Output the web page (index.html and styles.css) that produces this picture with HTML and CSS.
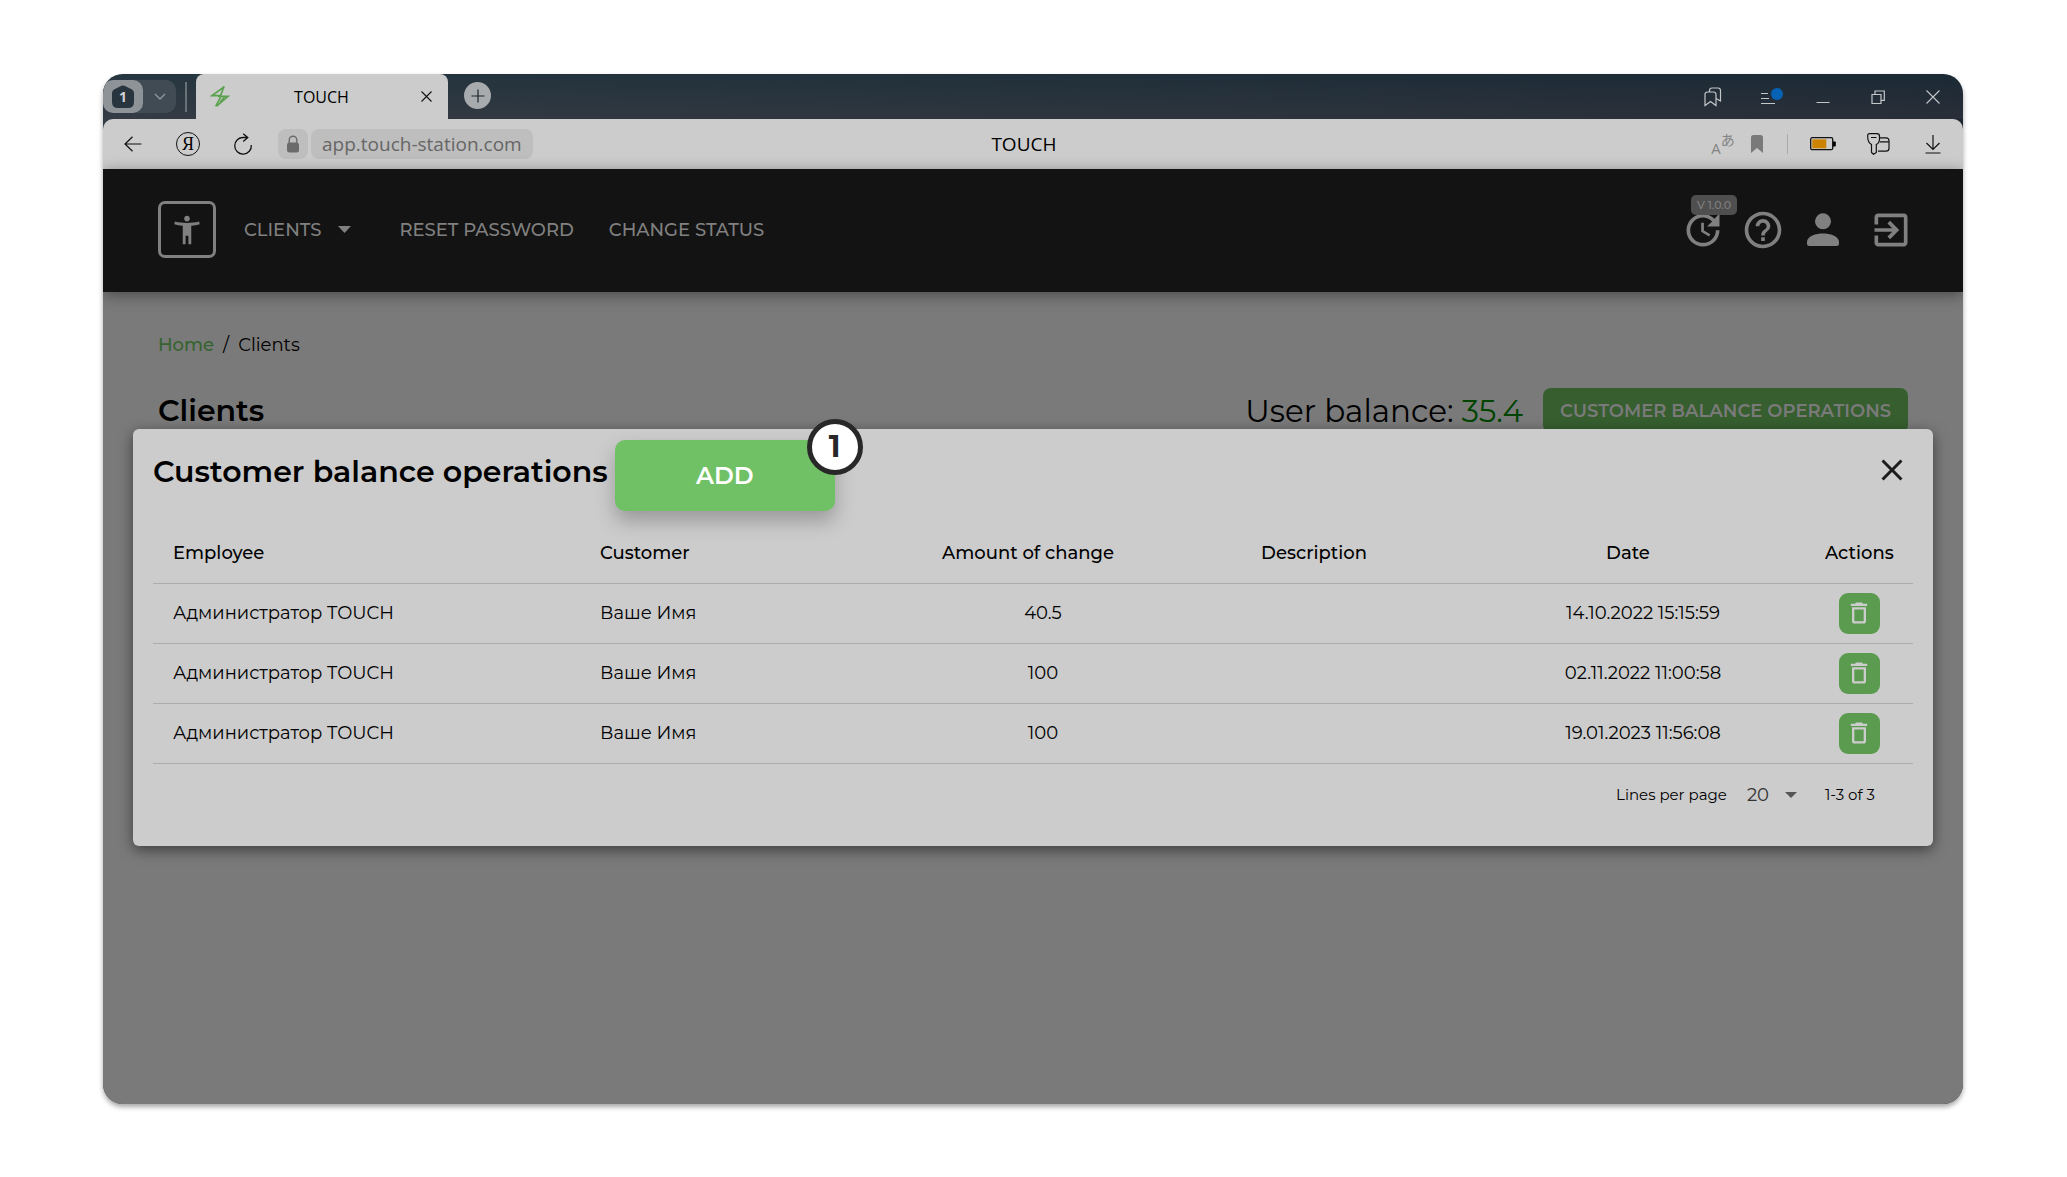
FILE: index.html
```html
<!DOCTYPE html>
<html lang="en">
<head>
<meta charset="utf-8">
<title>TOUCH</title>
<link rel="stylesheet" href="styles.css">
</head>
<body>
<div class="window">
  <div class="tabstrip">
    <div class="tab-group">
      <button class="group-home" aria-label="Tab group">
        <svg width="22" height="24" viewBox="0 0 22 24"><path d="M8 1.6Q11-.4 14 1.6L20 4.600Q22 5.800 22 8V17Q22 23 16 23H6Q0 23 0 17V8Q0 5.800 2 4.600Z" fill="#29353e"/></svg>
        <span class="group-count">1</span>
      </button>
      <button class="group-more" aria-label="More groups">
        <svg width="12" height="8" viewBox="0 0 12 8"><path d="M1 1l5 5 5-5" fill="none" stroke="#8f959a" stroke-width="1.400"/></svg>
      </button>
    </div>
    <span class="strip-divider"></span>
    <div class="tab">
      <svg class="tab-logo" width="20" height="21" viewBox="0 0 60 63"><g fill="none" stroke="#5ba24f" stroke-width="5"><path d="M42 3L6 29H34"/><path d="M42 1L30 34"/><path d="M20 60L54 31H24"/><path d="M32 33L17 61M43 33L31 48"/></g></svg>
      <span class="tab-title">TOUCH</span>
      <button class="tab-close" aria-label="Close tab"><svg width="11" height="11" viewBox="0 0 11 11"><path d="M.5.5l10 10M10.500.5l-10 10" stroke="#111" stroke-width="1.100"/></svg></button>
    </div>
    <button class="tab-new" aria-label="New tab"><svg width="14" height="14" viewBox="0 0 14 14"><path d="M7 .5v13M.5 7h13" stroke="#1b242b" stroke-width="1.200"/></svg></button>
    <div class="window-tools">
      <button aria-label="Bookmarks"><svg width="18" height="20" viewBox="0 0 18 20" fill="none" stroke="#c4c7ca" stroke-width="1.200"><path d="M1 18.500V7.500Q1 5 3.500 5H9.500Q12 5 12 7.500V18.500L6.500 14.500Z"/><path d="M5.500 5V3.500Q5.500 1 8 1H14Q16.500 1 16.500 3.500V14L12 11.500"/></svg></button>
      <button aria-label="Menu"><svg width="32" height="20" viewBox="-8 0 32 20"><path d="M1 6.500H8M1 11.500H9M1 16.500H15" stroke="#c4c7ca" stroke-width="1.200"/><circle cx="17" cy="7" r="6" fill="#0562b4"/></svg></button>
      <button aria-label="Minimize"><svg width="14" height="14" viewBox="0 0 14 14"><path d="M.5 12.500h13" stroke="#c4c7ca" stroke-width="1.200"/></svg></button>
      <button aria-label="Restore"><svg width="14" height="14" viewBox="0 0 14 14" fill="none" stroke="#c4c7ca" stroke-width="1.200"><path d="M1 4.500h9v9H1zM4 4.500V1h9.300v9.300H10"/></svg></button>
      <button aria-label="Close window"><svg width="14" height="14" viewBox="0 0 14 14"><path d="M.5.5l13 13M13.500.5l-13 13" stroke="#c4c7ca" stroke-width="1.100"/></svg></button>
    </div>
  </div>

  <div class="toolbar">
    <div class="toolbar-left">
      <button aria-label="Back"><svg width="18" height="16" viewBox="0 0 18 16" fill="none" stroke="#111" stroke-width="1.200"><path d="M17.500 8H1M8.500.7L1 8l7.500 7.300"/></svg></button>
      <button class="ya" aria-label="Yandex">Я</button>
      <button aria-label="Reload"><svg width="20" height="22" viewBox="0 0 20 22" fill="none" stroke="#111" stroke-width="1.300"><path d="M18.300 12A8.300 8.300 0 1 1 10.500 4.500H15M10.200.7L14.800 4.500 10.200 8.600"/></svg></button>
      <div class="address">
        <button class="lock" aria-label="Connection"><svg width="14" height="18" viewBox="0 0 14 18"><path d="M3.200 8V5a3.800 3.800 0 0 1 7.600 0v3" fill="none" stroke="#6b6b6b" stroke-width="1.400"/><rect x="1" y="7.500" width="12" height="10" rx="2.500" fill="#6b6b6b"/></svg></button>
        <a class="url" href="#">app.touch-station.com</a>
      </div>
    </div>
    <div class="toolbar-title">TOUCH</div>
    <div class="toolbar-right">
      <button class="translate" aria-label="Translate"><span class="tr-a">A</span><span class="tr-b">あ</span></button>
      <button class="mark" aria-label="Bookmark this page"><svg width="12" height="18" viewBox="0 0 12 18"><path d="M0 2.500Q0 0 2.500 0H9.500Q12 0 12 2.500V18L6 13 0 18Z" fill="#7a7a7a"/></svg></button>
      <span class="bar-divider"></span>
      <button aria-label="Battery"><svg width="26" height="14" viewBox="0 0 26 14"><rect x=".7" y=".7" width="22" height="12" rx="1.500" fill="none" stroke="#111" stroke-width="1.300"/><rect x="2.300" y="2.300" width="14" height="9" fill="#cc8400"/><path d="M23 4.500h2q.8 0 .8.800v3.400q0 .8-.8.800h-2z" fill="#000"/></svg></button>
      <button aria-label="Passwords"><svg width="23" height="22" viewBox="0 0 23 22" fill="none" stroke="#111" stroke-width="1.200"><path d="M2.500.7H10Q12.500.7 12.500 3.200V6Q12.500 10 9.300 11.500V19.500L6.500 21.300 4.500 19.500V11.500Q1 9.500.8 5L.7 2.500Q.7.700 2.500.7ZM4 4.500H9.500M13 4.800H19Q22 4.800 22 7.800V15.200Q22 18.200 19 18.200H11M13 8.800H22"/></svg></button>
      <button aria-label="Downloads"><svg width="16" height="20" viewBox="0 0 16 20" fill="none" stroke="#111" stroke-width="1.200"><path d="M8 1v14.500M1.500 9L8 15.500 14.500 9M.5 19h15"/></svg></button>
    </div>
  </div>

  <div class="app">
    <header class="app-header">
      <nav class="nav">
        <a class="logo" href="#" aria-label="Accessibility"><svg width="34" height="34" viewBox="0 0 24 24" fill="currentColor"><path d="M20.500 6c-2.610.7-5.670 1-8.500 1s-5.890-.3-8.500-1L3 8c1.860.5 4 .83 6 1v13h2v-6h2v6h2V9c2-.17 4.140-.5 6-1l-.5-2zM12 6c1.100 0 2-.9 2-2s-.9-2-2-2-2 .9-2 2 .9 2 2 2z"/></svg></a>
        <a class="nav-link nav-clients" href="#">CLIENTS <svg width="13" height="7" viewBox="0 0 13 7"><path d="M0 0h13L6.500 7z" fill="currentColor"/></svg></a>
        <a class="nav-link" href="#">RESET PASSWORD</a>
        <a class="nav-link" href="#">CHANGE STATUS</a>
      </nav>
      <div class="header-tools">
        <button class="tool" aria-label="Updates"><svg width="44" height="44" viewBox="0 0 24 24" fill="currentColor"><path d="M21 10.120h-6.780l2.740-2.820c-2.730-2.700-7.150-2.800-9.880-.1-2.730 2.710-2.730 7.080 0 9.790s7.150 2.710 9.880 0C18.320 15.650 19 14.080 19 12.100h2c0 1.980-.88 4.550-2.640 6.290-3.510 3.480-9.210 3.480-12.720 0-3.500-3.470-3.530-9.110-.02-12.580s9.140-3.470 12.650 0L21 3v7.120zM12.500 8v4.250l3.500 2.080-.72 1.210L11 13V8h1.500z"/></svg><span class="version">V 1.0.0</span></button>
        <button class="tool" aria-label="Help"><svg width="44" height="44" viewBox="0 0 24 24" fill="currentColor"><path d="M11 18h2v-2h-2v2zm1-16C6.480 2 2 6.480 2 12s4.480 10 10 10 10-4.480 10-10S17.520 2 12 2zm0 18c-4.410 0-8-3.590-8-8s3.590-8 8-8 8 3.590 8 8-3.590 8-8 8zm0-14c-2.210 0-4 1.790-4 4h2c0-1.100.9-2 2-2s2 .9 2 2c0 2-3 1.750-3 5h2c0-2.250 3-2.500 3-5 0-2.210-1.790-4-4-4z"/></svg></button>
        <button class="tool" aria-label="Profile"><svg width="32" height="33" viewBox="0 0 32 33" fill="currentColor"><circle cx="16" cy="8.300" r="8"/><path d="M0 29C0 23 9 20.500 16 20.500S32 23 32 29V30.500Q32 33 29.500 33H2.500Q0 33 0 30.500Z"/></svg></button>
        <button class="tool tool-exit" aria-label="Log out"><svg width="44" height="44" viewBox="0 0 24 24" fill="currentColor"><path d="M10.090 15.590L11.500 17l5-5-5-5-1.410 1.410L12.670 11H3v2h9.670l-2.580 2.590zM19 3H5c-1.110 0-2 .9-2 2v4h2V5h14v14H5v-4H3v4c0 1.100.89 2 2 2h14c1.100 0 2-.9 2-2V5c0-1.100-.9-2-2-2z"/></svg></button>
      </div>
    </header>

    <main class="page">
      <nav class="crumbs"><a href="#">Home</a><span>/</span><span>Clients</span></nav>
      <div class="page-head">
        <h1>Clients</h1>
        <div class="balance">User balance: <span class="balance-value">35.4</span></div>
        <button class="btn-operations">CUSTOMER BALANCE OPERATIONS</button>
      </div>
    </main>

    <div class="overlay">
      <section class="modal" role="dialog" aria-labelledby="dialog-title">
        <div class="modal-head">
          <h2 id="dialog-title">Customer balance operations</h2>
          <button class="btn-add">ADD<span class="step">1</span></button>
          <button class="modal-close" aria-label="Close"><svg width="36" height="36" viewBox="0 0 24 24"><path d="M19 6.410L17.590 5 12 10.590 6.410 5 5 6.410 10.590 12 5 17.590 6.410 19 12 13.410 17.590 19 19 17.590 13.410 12z" fill="#1c1c1c"/></svg></button>
        </div>
        <table class="ops">
          <colgroup><col class="c-employee"><col class="c-customer"><col class="c-amount"><col class="c-desc"><col class="c-date"><col class="c-actions"></colgroup>
          <thead>
            <tr><th>Employee</th><th>Customer</th><th class="mid sortable">Amount of change</th><th class="mid sortable">Description</th><th class="mid sortable">Date</th><th class="mid">Actions</th></tr>
          </thead>
          <tbody>
            <tr><td>Администратор TOUCH</td><td>Ваше Имя</td><td class="mid">40.5</td><td></td><td class="mid">14.10.2022 15:15:59</td><td class="mid"><button class="btn-delete" aria-label="Delete"><svg width="28" height="28" viewBox="0 0 24 24"><path d="M6 19c0 1.100.9 2 2 2h8c1.100 0 2-.9 2-2V7H6v12zM8 9h8v10H8V9zm7.500-5l-1-1h-5l-1 1H5v2h14V4z" fill="#cccccc"/></svg></button></td></tr>
            <tr><td>Администратор TOUCH</td><td>Ваше Имя</td><td class="mid">100</td><td></td><td class="mid">02.11.2022 11:00:58</td><td class="mid"><button class="btn-delete" aria-label="Delete"><svg width="28" height="28" viewBox="0 0 24 24"><path d="M6 19c0 1.100.9 2 2 2h8c1.100 0 2-.9 2-2V7H6v12zM8 9h8v10H8V9zm7.500-5l-1-1h-5l-1 1H5v2h14V4z" fill="#cccccc"/></svg></button></td></tr>
            <tr><td>Администратор TOUCH</td><td>Ваше Имя</td><td class="mid">100</td><td></td><td class="mid">19.01.2023 11:56:08</td><td class="mid"><button class="btn-delete" aria-label="Delete"><svg width="28" height="28" viewBox="0 0 24 24"><path d="M6 19c0 1.100.9 2 2 2h8c1.100 0 2-.9 2-2V7H6v12zM8 9h8v10H8V9zm7.500-5l-1-1h-5l-1 1H5v2h14V4z" fill="#cccccc"/></svg></button></td></tr>
          </tbody>
        </table>
        <div class="pager">
          <label for="lines">Lines per page</label>
          <span class="select-box">
            <select id="lines"><option>20</option><option>50</option></select>
            <svg width="12" height="6" viewBox="0 0 12 6"><path d="M0 0h12L6 6z" fill="#555"/></svg>
          </span>
          <span class="range">1-3 of 3</span>
        </div>
      </section>
    </div>
  </div>
</div>
</body>
</html>
```
FILE: styles.css
```css
* { box-sizing: border-box; }

body {
  margin: 0;
  min-height: 100vh;
  padding: 74px 104px 73px 103px;
  display: flex;
  background: #fff;
  font-family: Montserrat, Inter, "Noto Sans", sans-serif;
  font-size: 18px;
  color: #000;
}

button {
  display: flex;
  align-items: center;
  justify-content: center;
  margin: 0;
  padding: 0;
  border: 0;
  background: none;
  font: inherit;
  color: inherit;
}

a { color: inherit; text-decoration: none; }
svg { display: block; flex: none; }

.window {
  flex: 1;
  min-width: 0;
  display: flex;
  flex-direction: column;
  overflow: hidden;
  border-radius: 20px;
  background: linear-gradient(90deg, #323d46, #1f2832);
  box-shadow: 0 3px 5px rgba(0, 0, 0, .35);
}

/* Browser tab strip */
.tabstrip {
  display: flex;
  height: 45px;
  background: linear-gradient(180deg, rgba(20, 44, 56, .4), rgba(56, 56, 66, .4));
  font-family: "Segoe UI", "Open Sans", sans-serif;
}

.tab-group {
  display: flex;
  width: 73px;
  height: 33px;
  margin-top: 6px;
  border-radius: 10px;
  background: #414b53;
}

.group-home {
  position: relative;
  width: 40px;
  border-radius: 10px;
  background: #8e9397;
}

.group-count {
  position: absolute;
  inset: 0;
  line-height: 34px;
  font-size: 14px;
  font-weight: 700;
  color: #d0d2d4;
}

.group-more { width: 33px; }

.strip-divider {
  width: 2px;
  height: 30px;
  margin: 8px 9px 0;
  background: #697178;
}

.tab {
  display: flex;
  align-items: center;
  width: 252px;
  padding: 0 16px 0 14px;
  border-radius: 8px 8px 0 0;
  background: #cccccc;
}

.tab-title { flex: 1; padding-right: 8px; text-align: center; font-size: 16px; }

.tab-new {
  width: 27px;
  height: 27px;
  margin: 8px 0 0 16px;
  border-radius: 50%;
  background: #a8abad;
}

.window-tools {
  display: flex;
  align-items: center;
  gap: 15px;
  margin-left: auto;
  padding-right: 10px;
}
.window-tools button { width: 40px; height: 40px; }

/* Address bar */
.toolbar {
  display: grid;
  grid-template-columns: 49fr auto 50fr;
  align-items: center;
  height: 50px;
  border-radius: 10px 10px 0 0;
  background: #cccccc;
  font-family: "Segoe UI", "Open Sans", sans-serif;
}

.toolbar-left, .toolbar-right, .address { display: flex; align-items: center; }
.toolbar-left { padding-left: 10px; gap: 15px; }
.toolbar-left > button { width: 40px; height: 40px; }
.address { gap: 3px; }

.toolbar-left > .ya {
  width: 24px;
  height: 24px;
  margin: 0 8px;
  border: 1px solid #111;
  border-radius: 50%;
  font-family: "Liberation Serif", serif;
  font-size: 18px;
}

.lock {
  width: 30px;
  height: 30px;
  border-radius: 8px;
  background: #bebebe;
}

.url {
  padding: 0 11px;
  border-radius: 8px;
  background: #bebebe;
  font-size: 19px;
  line-height: 30px;
  color: #666;
}

.toolbar-title { font-size: 19px; }

.toolbar-right { justify-content: flex-end; gap: 15px; padding-right: 10px; }
.toolbar-right button { width: 40px; height: 40px; }
.toolbar-right .translate { width: 24px; color: #848484; }
.tr-a { padding-top: 8px; font-size: 15px; }
.tr-b { padding-bottom: 10px; font-family: "Noto Sans CJK JP", sans-serif; font-size: 14px; }
.toolbar-right .mark { width: 14px; }
.bar-divider { width: 1px; height: 20px; margin: 0 0 0 8px; background: #aaa; }

/* Application */
.app {
  position: relative;
  flex: 1;
  display: flex;
  flex-direction: column;
  background: #7a7a7a;
}

.app-header {
  display: flex;
  align-items: center;
  justify-content: space-between;
  height: 123px;
  padding: 0 50px 2px 55px;
  background: #131313;
  color: #808080;
  box-shadow: 0 3px 14px rgba(0, 0, 0, .4);
}

.nav { display: flex; align-items: center; }

.logo {
  display: flex;
  align-items: center;
  justify-content: center;
  width: 58px;
  height: 57px;
  border: 3px solid;
  border-radius: 7px;
}

.nav-link {
  display: flex;
  align-items: center;
  margin-left: 35px;
  font-size: 18px;
  font-weight: 500;
}
.nav-clients { gap: 17px; margin-left: 28px; margin-right: 13px; }

.header-tools { display: flex; gap: 16px; }
.tool { position: relative; width: 44px; height: 44px; }
.tool-exit { margin-left: 8px; }

.version {
  position: absolute;
  top: -13px;
  left: 10px;
  width: 46px;
  border-radius: 5px;
  background: #4f4f4f;
  font-size: 11px;
  line-height: 20px;
  font-weight: 500;
}

.page { padding: 42px 55px; }

.crumbs {
  display: flex;
  gap: 9px;
  font-size: 18px;
  line-height: 22px;
}
.crumbs a { color: #36632f; font-weight: 500; }

.page-head {
  display: flex;
  align-items: center;
  margin-top: 32px;
}

h1, h2 { margin: 0; font-size: 30px; font-weight: 600; }
.page-head h1 { flex: 1; }
.balance { font-size: 31px; }
.balance-value { color: #004500; }

.btn-operations {
  height: 45px;
  min-width: 365px;
  margin-left: 20px;
  border-radius: 8px;
  background: #365e2f;
  color: #7a7a7a;
  font-size: 18px;
  font-weight: 600;
}

/* Dialog */
.overlay {
  position: absolute;
  inset: 0;
  display: flex;
  align-items: center;
  padding: 0 30px;
}

.modal {
  flex: 1;
  margin-top: 2px;
  padding: 11px 20px 21px;
  border-radius: 6px;
  background: #cccccc;
  box-shadow: 0 4px 14px rgba(0, 0, 0, .5);
}

.modal-head { display: flex; align-items: flex-start; }
.modal-head h2 { line-height: 64px; }

.btn-add {
  position: relative;
  width: 220px;
  height: 71px;
  margin-left: 7px;
  border-radius: 10px;
  background: #70c165;
  box-shadow: 0 10px 20px rgba(0, 0, 0, .25);
  color: #fff;
  font-size: 24px;
  font-weight: 600;
}

.step {
  position: absolute;
  top: -21px;
  right: -28px;
  width: 56px;
  border: 5px solid #282828;
  border-radius: 50%;
  background: #fff;
  color: #282828;
  font-size: 30px;
  font-weight: 700;
  line-height: 46px;
}

.modal-close { width: 36px; height: 60px; margin: 0 3px 0 auto; }

.ops {
  width: 100%;
  margin-top: 13px;
  border-spacing: 0;
  table-layout: fixed;
}
.ops th, .ops td {
  height: 60px;
  padding: 0 20px 1px;
  border-bottom: 1px solid #adadad;
  text-align: left;
}
.ops th { font-weight: 500; }
.ops .mid { text-align: center; }
.ops .sortable { padding-right: 50px; white-space: nowrap; }
.c-employee { width: 427px; }
.c-customer { width: 329px; }
.c-amount { width: 268px; }
.c-desc { width: 304px; }
.c-date { width: 324px; }
.c-actions { width: 108px; }

.btn-delete {
  width: 41px;
  height: 41px;
  margin: 0 auto;
  border-radius: 9px;
  background: #5a9b4f;
}

.pager {
  display: flex;
  align-items: center;
  justify-content: flex-end;
  height: 61px;
  padding-right: 38px;
  font-size: 15px;
}

.select-box { display: flex; align-items: center; margin: 0 28px 0 20px; }
.select-box select {
  width: 38px;
  padding: 0;
  border: 0;
  appearance: none;
  background: none;
  font: inherit;
  font-size: 18px;
  color: #333;
}
```
